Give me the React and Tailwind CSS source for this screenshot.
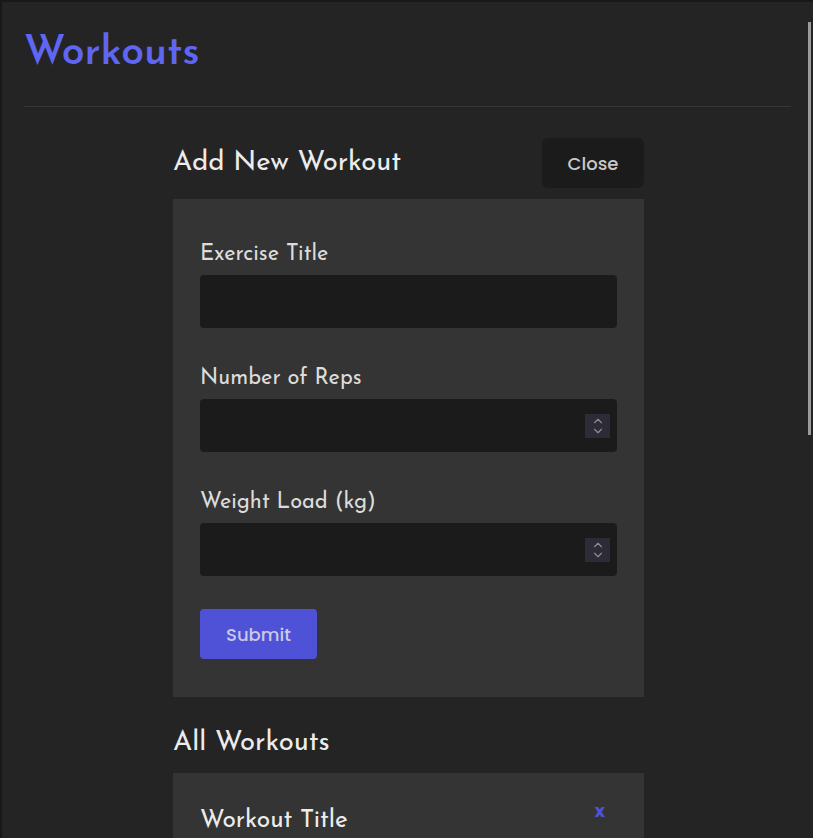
import { ChevronUp, ChevronDown } from 'lucide-react'

const heading = { fontFamily: '"Josefin Sans", Lato, "Noto Sans", sans-serif' }
const btnFont = { fontFamily: 'Poppins, Inter, "Noto Sans", sans-serif' }

function Field({ label, number }) {
  return (
    <div className="flex flex-col">
      <label className="h-7 text-[21.8px] leading-[34px] text-[#dcdcdc]" style={heading}>
        {label}
      </label>
      <div className="relative mt-[9px]">
        <div className="h-[53px] w-full rounded-[4px] bg-[#1b1b1b]" />
        {number && (
          <div className="absolute right-[7px] top-[15px] flex h-[24px] w-[25px] flex-col items-center justify-center bg-[#2c2b36] text-[#8d8a99]">
            <ChevronUp className="-mb-[4px] h-[14px] w-[14px]" strokeWidth={2} />
            <ChevronDown className="h-[14px] w-[14px]" strokeWidth={2} />
          </div>
        )}
      </div>
    </div>
  )
}

export default function App() {
  return (
    <div className="relative h-[838px] overflow-hidden border-l-2 border-t-2 border-[#18181c] bg-[#242424] px-[22px]">
      <div className="absolute right-[2px] top-[20px] h-[413px] w-[3px] bg-[#9b9b9b]" />

      <header className="border-b border-[#363636] pb-[28px] pt-[28px]">
        <h1 className="h-[48px] text-[41px] font-semibold leading-[48px] text-[#5f66f2]" style={heading}>
          Workouts
        </h1>
      </header>

      <div className="pl-[2px]">
        <main className="mx-auto mt-[31px] w-[471px]">
          <div className="flex items-center justify-between">
            <h2 className="pt-[2px] text-[27.5px] text-[#ececec]" style={heading}>
              Add New Workout
            </h2>
            <button
              className="h-[50px] w-[102px] rounded-[6px] bg-[#1b1b1b] text-[18px] font-medium text-[#c8c8c8]"
              style={btnFont}
            >
              Close
            </button>
          </div>

          <form className="mt-[11px] flex flex-col gap-[34px] bg-[#343434] px-[27px] pb-[38px] pt-[39px]">
            <Field label="Exercise Title" />
            <Field label="Number of Reps" number />
            <Field label="Weight Load (kg)" number />
            <div>
              <button
                type="button"
                className="-mt-[1px] h-[50px] w-[117px] rounded-[4px] bg-[#4f52d6] text-[18px] font-medium text-[#c9c9e6]"
                style={btnFont}
              >
                Submit
              </button>
            </div>
          </form>

          <h2 className="mt-[32px] h-[28px] text-[27.5px] leading-[28px] text-[#ececec]" style={heading}>
            All Workouts
          </h2>

          <div className="mt-[16px] flex items-start justify-between bg-[#343434] pb-6 pl-[27px] pr-[28px] pt-[30px]">
            <h3 className="text-[24.5px] text-[#ececec]" style={heading}>
              Workout Title
            </h3>
            <span className="mr-[11px] mt-[-6px] text-[18px] font-bold text-[#4f52d6]" style={btnFont}>
              x
            </span>
          </div>
        </main>
      </div>
    </div>
  )
}
